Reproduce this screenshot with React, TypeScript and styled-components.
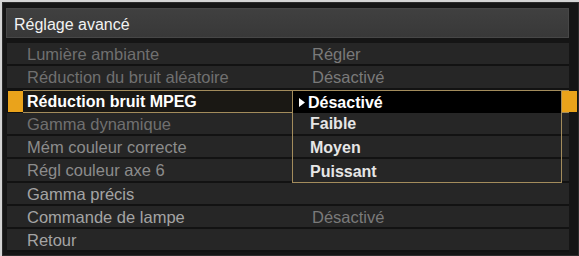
import React from "react";
import styled, { createGlobalStyle } from "styled-components";

const Global = createGlobalStyle`
  html, body { margin: 0; padding: 0; background: #d4d4d4; }
  body { font-family: "Liberation Sans", Arial, sans-serif; }
`;

const Screen = styled.div`
  margin: 2px 0 0 2px;
  width: 577px;
  height: 254px;
  box-sizing: border-box;
  background: #151515;
  border: 1px solid #2c2c2c;
  padding: 5px 9px 0 4px;
  display: flex;
  flex-direction: column;
  overflow: hidden;
`;

const TitleBar = styled.div`
  height: 30px;
  flex: none;
  box-sizing: border-box;
  background: linear-gradient(#404040, #383838);
  border: 1px solid #474747;
  display: flex;
  align-items: center;
  padding: 3px 0 0 7px;
  color: #f2f2f2;
  font-size: 16px;
  margin-left: -1px;
`;

const List = styled.div`
  margin-top: 5px;
  display: flex;
  flex-direction: column;
`;

const Row = styled.div`
  position: relative;
  height: 23.25px;
  box-sizing: border-box;
  background: #262626;
  border-bottom: 2px solid #121212;
  padding-top: 2px;
  display: grid;
  grid-template-columns: 305px 1fr;
  align-items: center;
  font-size: 16.5px;
`;

const Label = styled.span<{ $tone: "dim" | "mid" | "bright" }>`
  padding-left: 20px;
  white-space: nowrap;
  color: ${(p) => (p.$tone === "dim" ? "#707070" : p.$tone === "mid" ? "#8c8c8c" : "#a4a4a4")};
`;

const Value = styled.span`
  color: #7a7a7a;
  white-space: nowrap;
`;

const ActiveRow = styled.div`
  position: relative;
  height: 23.25px;
  box-sizing: border-box;
  display: flex;
  align-items: stretch;
  background: #121212;
`;

const Marker = styled.div<{ $side: "left" | "right" }>`
  position: absolute;
  top: 1px;
  bottom: 1px;
  width: 15px;
  background: #eaa31b;
  ${(p) => (p.$side === "left" ? "left: 1px;" : "left: 555px;")}
`;

const ActiveBody = styled.div`
  margin-left: 16px;
  flex: 1;
  box-sizing: border-box;
  border-top: 1px solid #a38c5c;
  border-bottom: 1px solid #a38c5c;
  background: #1a1814;
  display: flex;
  align-items: center;
  padding: 2px 0 0 4px;
  color: #ffffff;
  font-weight: bold;
  font-size: 16px;
`;

const Popup = styled.div`
  position: absolute;
  left: 285px;
  top: 0;
  width: 270px;
  box-sizing: border-box;
  border: 1px solid #a38c5c;
  background: #262626;
  display: flex;
  flex-direction: column;
  z-index: 2;
`;

const Current = styled.div`
  height: 22.25px;
  box-sizing: border-box;
  background: #000;
  display: flex;
  align-items: center;
  gap: 3px;
  padding: 2px 0 0 6px;
  color: #fff;
  font-weight: bold;
  font-size: 16px;
`;

const Option = styled.div<{ $last?: boolean }>`
  height: ${(p) => (p.$last ? "22.5px" : "23.25px")};
  box-sizing: border-box;
  display: flex;
  align-items: center;
  padding: 2px 0 0 17px;
  color: #e6e6e6;
  font-weight: bold;
  font-size: 16px;
  border-bottom: ${(p) => (p.$last ? "none" : "2px solid #121212")};
`;

type Item = { label: string; tone: "dim" | "mid" | "bright"; value?: string };

const before: Item[] = [
  { label: "Lumière ambiante", tone: "dim", value: "Régler" },
  { label: "Réduction du bruit aléatoire", tone: "dim", value: "Désactivé" },
];

const after: Item[] = [
  { label: "Gamma dynamique", tone: "dim" },
  { label: "Mém couleur correcte", tone: "mid" },
  { label: "Régl couleur axe 6", tone: "mid" },
  { label: "Gamma précis", tone: "bright" },
  { label: "Commande de lampe", tone: "bright", value: "Désactivé" },
  { label: "Retour", tone: "bright" },
];

const MenuRow = ({ item }: { item: Item }) => (
  <Row>
    <Label $tone={item.tone}>{item.label}</Label>
    <Value>{item.value ?? ""}</Value>
  </Row>
);

export default function App() {
  return (
    <>
      <Global />
      <Screen>
        <TitleBar>Réglage avancé</TitleBar>
        <List>
          {before.map((it) => (
            <MenuRow key={it.label} item={it} />
          ))}
          <ActiveRow>
            <Marker $side="left" />
            <ActiveBody>Réduction bruit MPEG</ActiveBody>
            <Popup>
              <Current>
                <svg width="6" height="9" viewBox="0 0 6 9">
                  <polygon points="0,0 6,4.5 0,9" fill="#fff" />
                </svg>
                Désactivé
              </Current>
              <Option>Faible</Option>
              <Option>Moyen</Option>
              <Option $last>Puissant</Option>
            </Popup>
            <Marker $side="right" />
          </ActiveRow>
          {after.map((it) => (
            <MenuRow key={it.label} item={it} />
          ))}
        </List>
      </Screen>
    </>
  );
}
